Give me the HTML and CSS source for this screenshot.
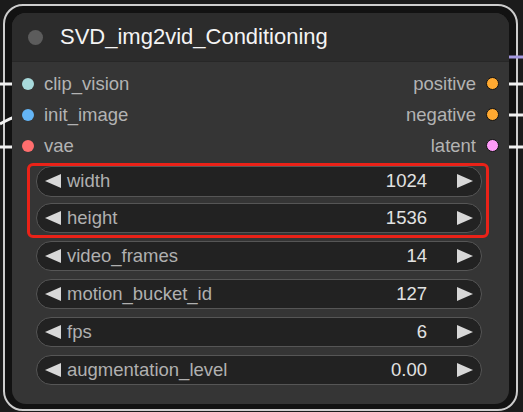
FILE: index.html
```html
<!DOCTYPE html>
<html>
<head>
    <meta name="viewport" content="width=device-width, initial-scale=1.0">
    <title>SVD_img2vid_Conditioning</title>
    <link rel="stylesheet" href="styles.css">
</head>
<body>
    <div class="canvas">
        <!-- link wires going into / out of the node -->
        <svg class="wires" width="523" height="412" viewBox="0 0 523 412">
            <path d="M0 84 H24" />
            <path d="M0 124 C8 120 12 116 24 115" />
            <path d="M0 147 H24" />
            <path d="M490 84 H523" />
            <path d="M490 115 H523" />
            <path d="M490 147 H523" />
            <path class="purple" d="M508 57 H523" />
        </svg>

        <div class="selection">
            <div class="node">
                <div class="title">
                    <span class="title-dot"></span>
                    <span class="title-text">SVD_img2vid_Conditioning</span>
                </div>

                <div class="slots">
                    <div class="slot-row">
                        <div class="slot-in"><i class="pin clip"></i>clip_vision</div>
                        <div class="slot-out">positive<i class="pin cond"></i></div>
                    </div>
                    <div class="slot-row">
                        <div class="slot-in"><i class="pin image"></i>init_image</div>
                        <div class="slot-out">negative<i class="pin cond"></i></div>
                    </div>
                    <div class="slot-row">
                        <div class="slot-in"><i class="pin vae"></i>vae</div>
                        <div class="slot-out">latent<i class="pin latent"></i></div>
                    </div>
                </div>

                <div class="widgets">
                    <div class="highlight">
                        <div class="widget">
                            <span class="arrow left"></span>
                            <span class="label">width</span>
                            <span class="value">1024</span>
                            <span class="arrow right"></span>
                        </div>
                        <div class="widget">
                            <span class="arrow left"></span>
                            <span class="label">height</span>
                            <span class="value">1536</span>
                            <span class="arrow right"></span>
                        </div>
                    </div>
                    <div class="widget">
                        <span class="arrow left"></span>
                        <span class="label">video_frames</span>
                        <span class="value">14</span>
                        <span class="arrow right"></span>
                    </div>
                    <div class="widget">
                        <span class="arrow left"></span>
                        <span class="label">motion_bucket_id</span>
                        <span class="value">127</span>
                        <span class="arrow right"></span>
                    </div>
                    <div class="widget">
                        <span class="arrow left"></span>
                        <span class="label">fps</span>
                        <span class="value">6</span>
                        <span class="arrow right"></span>
                    </div>
                    <div class="widget">
                        <span class="arrow left"></span>
                        <span class="label">augmentation_level</span>
                        <span class="value">0.00</span>
                        <span class="arrow right"></span>
                    </div>
                </div>
            </div>
        </div>
    </div>
</body>
</html>
```

FILE: styles.css
```css
body {
    margin: 0;
    background-color: #1b1b1b;
    font-family: "Liberation Sans", Arial, sans-serif;
}
.canvas {
    position: relative;
    width: 523px;
    height: 412px;
    padding: 4px 0 0 3px;
    box-sizing: border-box;
    overflow: hidden;
}
.wires {
    position: absolute;
    left: 0;
    top: 0;
}
.wires path {
    fill: none;
    stroke: #f2f2f2;
    stroke-width: 3;
}
.wires .purple {
    stroke: #a499e0;
    stroke-width: 3;
}
.selection {
    width: 515px;
    height: 407px;
    box-sizing: border-box;
    border: 2px solid #cdcdcd;
    border-radius: 20px;
    padding: 7px;
    background-color: #121212;
}
.node {
    position: relative;
    z-index: 1;
    width: 497px;
    height: 391px;
    border-radius: 14px;
    background-color: #353535;
    overflow: hidden;
}
.title {
    display: flex;
    align-items: center;
    height: 49px;
    padding-left: 16px;
    box-sizing: border-box;
    background-color: #2c2c2c;
    border-bottom: 1px solid #272727;
}
.title-dot {
    width: 15px;
    height: 15px;
    border-radius: 50%;
    background-color: #5c5c5c;
    margin-right: 17px;
}
.title-text {
    color: #f4f4f4;
    font-size: 22px;
    padding-bottom: 1px;
}
.slots {
    padding: 6px 10px 0 10px;
}
.slot-row {
    display: flex;
    justify-content: space-between;
    align-items: center;
    height: 31px;
    font-size: 18.5px;
    color: #b3b3b3;
}
.slot-in,
.slot-out {
    display: flex;
    align-items: center;
}
.pin {
    display: inline-block;
    width: 12px;
    height: 12px;
    border-radius: 50%;
}
.slot-in .pin {
    margin-right: 10px;
}
.slot-out .pin {
    margin-left: 10px;
    width: 11px;
    height: 11px;
    border: 1px solid #111;
}
.pin.clip { background-color: #a8dadc; }
.pin.image { background-color: #64b5f6; }
.pin.vae { background-color: #ff6e6e; }
.pin.cond { background-color: #ffa931; }
.pin.latent { background-color: #ff9cf9; }
.widgets {
    display: flex;
    flex-direction: column;
    gap: 7.5px;
    margin: 5px 0 0 24px;
    width: 446px;
}
.highlight {
    position: relative;
    display: flex;
    flex-direction: column;
    gap: 6px;
}
.highlight::after {
    content: "";
    position: absolute;
    top: -3px;
    left: -9px;
    right: -7px;
    bottom: -5px;
    border: 3.5px solid #ea2218;
    border-radius: 6px;
}
.widget {
    display: flex;
    align-items: center;
    height: 30.5px;
    box-sizing: border-box;
    padding: 0 8px;
    border: 1.5px solid #565656;
    border-radius: 15px;
    background-color: #222222;
    font-size: 18.5px;
}
.arrow {
    width: 0;
    height: 0;
    border-top: 7px solid transparent;
    border-bottom: 7px solid transparent;
}
.arrow.left {
    border-right: 16px solid #d8d8d8;
    margin-right: 6px;
}
.arrow.right {
    border-left: 16px solid #d8d8d8;
    margin-left: 30px;
}
.label {
    flex: 1;
    color: #b0b0b0;
}
.value {
    color: #e2e2e2;
}
```
